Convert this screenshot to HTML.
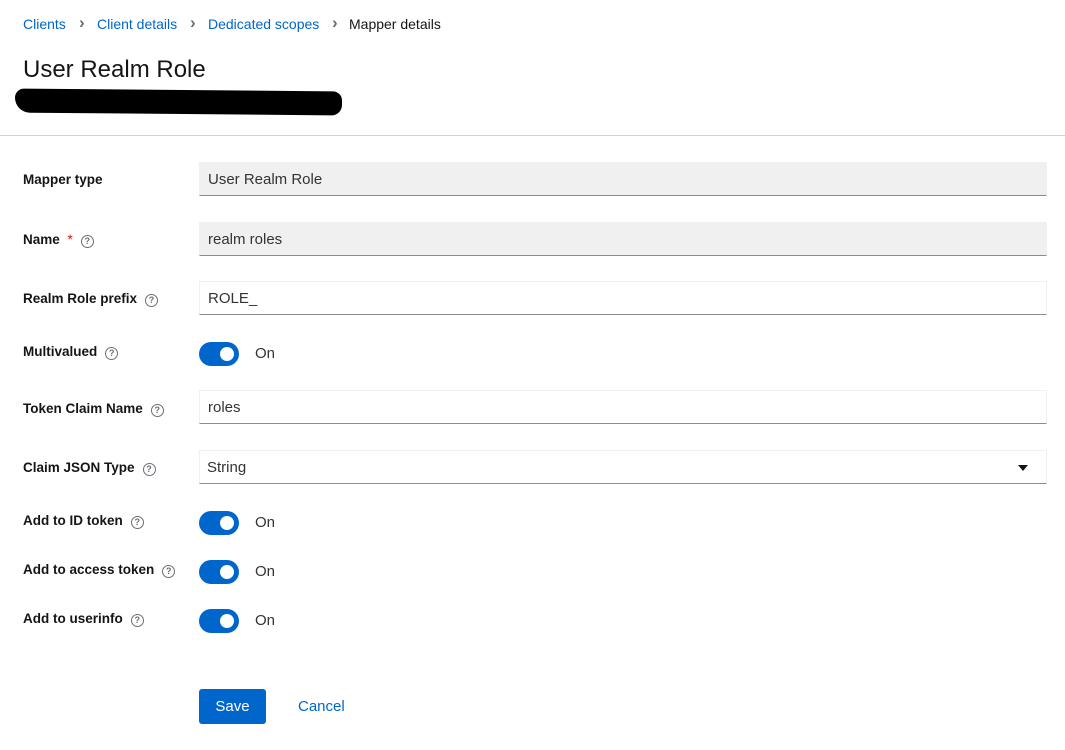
<!DOCTYPE html>
<html><head><style>
body{margin:0;background:#fff;font-family:"Liberation Sans",sans-serif;color:#151515;width:1065px;height:750px;overflow:hidden;position:relative}
.a{position:absolute}
.bc{top:16px;font-size:14px;color:#06c}
.sep{top:13px;color:#6a6e73;font-size:17px;font-weight:bold}
.lbl{left:23px;font-size:13.5px;font-weight:bold;color:#151515}
.q{display:inline-block;width:11px;height:11px;border:1.5px solid #6a6e73;border-radius:50%;font-size:9px;line-height:11px;text-align:center;color:#6a6e73;font-weight:bold;margin-left:8px;vertical-align:0px}
.f{left:199px;width:848px;height:34px;box-sizing:border-box;border:1px solid #f0f0f0;border-bottom:1px solid #8a8d90;font-size:15px;padding-left:8px;line-height:34px;color:#333}
.ro{background:#f0f0f0}
.tg{left:199px;width:40px;height:24px;border-radius:12px;background:#06c}
.tg:after{content:"";position:absolute;right:5px;top:5px;width:14px;height:14px;border-radius:50%;background:#fff}
.on{left:255px;font-size:15px;color:#333}
</style></head><body>
<div class="a bc" style="left:23px">Clients</div>
<div class="a sep" style="left:79px">›</div>
<div class="a bc" style="left:97px">Client details</div>
<div class="a sep" style="left:190px">›</div>
<div class="a bc" style="left:208px">Dedicated scopes</div>
<div class="a sep" style="left:332px">›</div>
<div class="a bc" style="left:349px;color:#151515">Mapper details</div>
<div class="a" style="left:23px;top:56px;font-size:24px">User Realm Role</div>
<div class="a" style="left:15px;top:90px;width:327px;height:24px;background:#000;border-radius:12px 12px 14px 20px;transform:skewY(0.5deg)"></div>
<div class="a" style="left:0;top:135px;width:1065px;height:1px;background:#d2d2d2"></div>

<div class="a lbl" style="top:172px">Mapper type</div>
<div class="a f ro" style="top:162px">User Realm Role</div>

<div class="a lbl" style="top:232px">Name <span style="color:#c9190b;font-weight:normal;margin-left:4px">*</span><span class="q">?</span></div>
<div class="a f ro" style="top:222px">realm roles</div>

<div class="a lbl" style="top:291px">Realm Role prefix<span class="q">?</span></div>
<div class="a f" style="top:281px">ROLE_</div>

<div class="a lbl" style="top:344px">Multivalued<span class="q">?</span></div>
<div class="a tg" style="top:342px"></div><div class="a on" style="top:345px">On</div>

<div class="a lbl" style="top:401px">Token Claim Name<span class="q">?</span></div>
<div class="a f" style="top:390px">roles</div>

<div class="a lbl" style="top:460px">Claim JSON Type<span class="q">?</span></div>
<div class="a f" style="top:450px;padding-left:7px">String<span style="position:absolute;right:18px;top:14px;border-left:5px solid transparent;border-right:5px solid transparent;border-top:6px solid #151515"></span></div>

<div class="a lbl" style="top:513px">Add to ID token<span class="q">?</span></div>
<div class="a tg" style="top:511px"></div><div class="a on" style="top:514px">On</div>
<div class="a lbl" style="top:562px">Add to access token<span class="q">?</span></div>
<div class="a tg" style="top:560px"></div><div class="a on" style="top:563px">On</div>
<div class="a lbl" style="top:611px">Add to userinfo<span class="q">?</span></div>
<div class="a tg" style="top:609px"></div><div class="a on" style="top:612px">On</div>

<div class="a" style="left:199px;top:689px;width:67px;height:35px;background:#06c;border-radius:3px;color:#fff;font-size:15px;text-align:center;line-height:35px">Save</div>
<div class="a" style="left:298px;top:698px;color:#06c;font-size:15px">Cancel</div>
</body></html>
